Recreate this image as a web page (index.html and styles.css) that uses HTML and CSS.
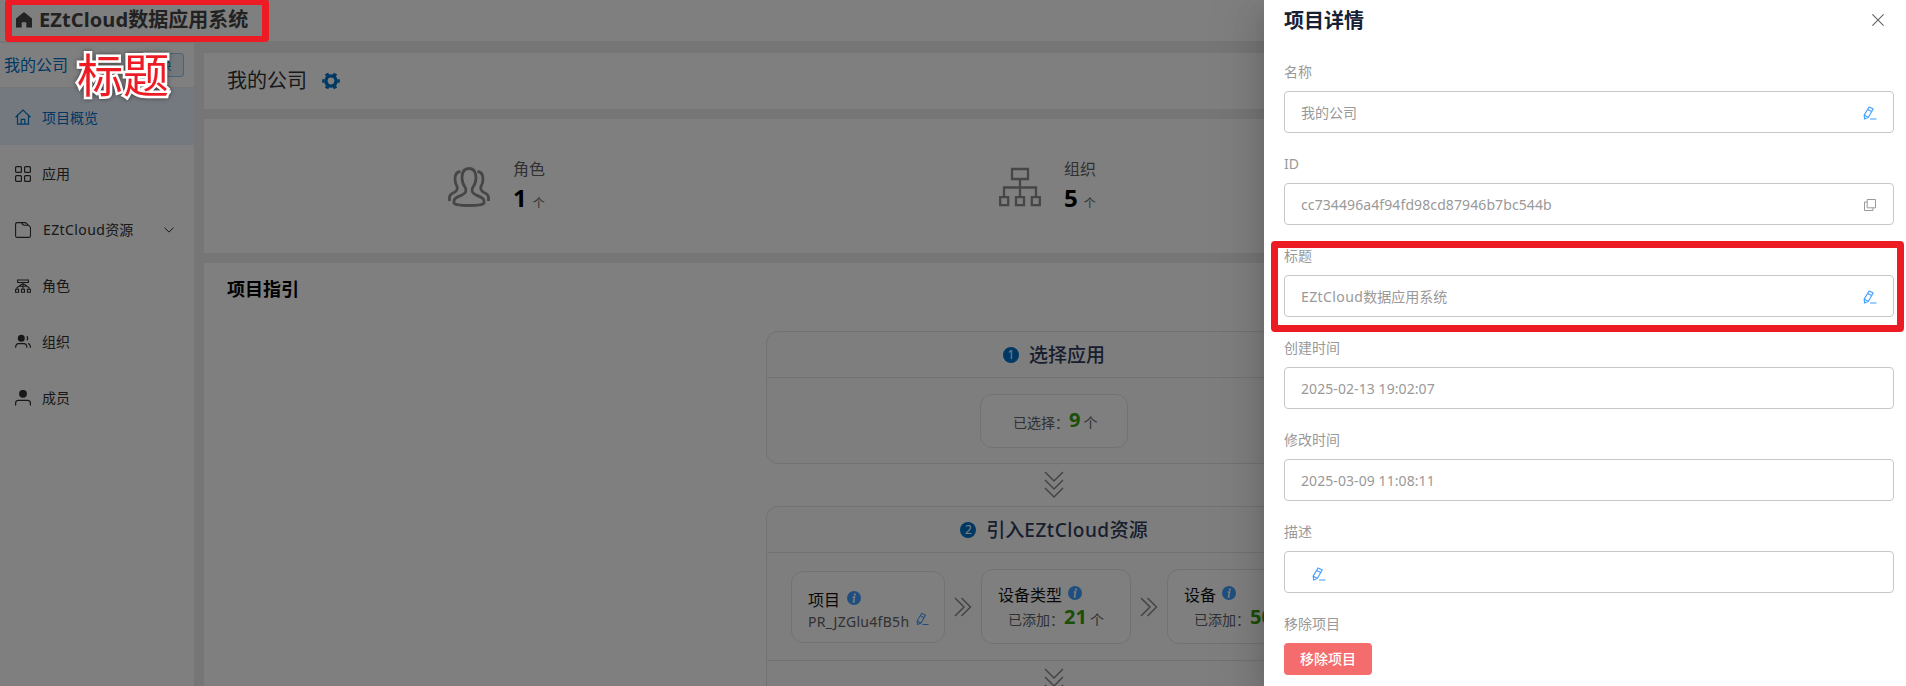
FILE: index.html
```html
<!DOCTYPE html>
<html lang="zh-CN">
<head>
<meta charset="utf-8">
<title>EZtCloud数据应用系统</title>
<link rel="stylesheet" href="styles.css">
</head>
<body>
<svg class="sprite" aria-hidden="true">
  <symbol id="edit" viewBox="0 0 14 14"><path d="M6.100 .9 10.200 3 5.400 11.300 1.700 13 1.100 9.200z M4.700 3.400 8.700 5.600 M1.300 9.200 5.200 11.300 M7 13h6.500" fill="none" stroke="currentColor" stroke-width="1.1"/></symbol>
  <symbol id="info" viewBox="0 0 14 14"><circle cx="7" cy="7" r="7" fill="currentColor"/><circle cx="7.9" cy="3.6" r="1.1" fill="#fff"/><path d="M5.700 6.100h1.800L6.500 10.600c0 .5.6.4 1.200 0" fill="none" stroke="#fff" stroke-width="1.5"/></symbol>
  <symbol id="down" viewBox="0 0 20 28"><path d="M1 1l9 9 9-9M1 9l9 9 9-9M1 17l9 9 9-9" fill="none" stroke="currentColor" stroke-width="1.5"/></symbol>
  <symbol id="next" viewBox="0 0 18 20"><path d="M1 1l9 9-9 9M7.500 1l9 9-9 9" fill="none" stroke="currentColor" stroke-width="1.5"/></symbol>
</svg>
<div class="app">
  <header class="topbar">
    <svg class="home" viewBox="0 0 16 16"><path d="M8 0 0 6.600V15.500h5.700V10.200h4.600v5.300H16V6.600z" fill="currentColor"/></svg>
    <h1><span class="lat">EZtCloud</span>数据应用系统</h1>
  </header>
  <div class="body">
    <aside class="side">
      <div class="company"><span>我的公司</span><button class="switch">切换</button></div>
      <nav>
        <a class="item active"><svg viewBox="0 0 16 16"><path d="M.5 8.200 8 1l7.500 7.200M2.500 6.700v8.500h11V6.700M6.200 15v-4.700h3.600V15" fill="none" stroke="currentColor" stroke-width="1.2"/></svg><span>项目概览</span></a>
        <a class="item"><svg viewBox="0 0 16 16"><g fill="none" stroke="currentColor" stroke-width="1.200"><rect x=".6" y=".6" width="5.800" height="5.800" rx="1"/><rect x="9.600" y=".6" width="5.800" height="5.800" rx="1"/><rect x=".6" y="9.600" width="5.800" height="5.800" rx="1"/><rect x="9.600" y="9.600" width="5.800" height="5.800" rx="1"/></g></svg><span>应用</span></a>
        <a class="item"><svg viewBox="0 0 16 16"><path d="M2 .6h8.500l5 4.600v8.700a1.500 1.500 0 0 1-1.500 1.500H2A1.500 1.500 0 0 1 .6 14V2A1.500 1.500 0 0 1 2 .6zM6.800.6c0 1.800.7 2.400 2.400 2.700h3.500" fill="none" stroke="currentColor" stroke-width="1.100"/></svg><span class="wide"><span class="lat">EZtCloud</span>资源</span><svg class="arrow" viewBox="0 0 10 6"><path d="M.5.7 5 5.100 9.500.7" fill="none" stroke="currentColor"/></svg></a>
        <a class="item"><svg viewBox="0 0 16 16"><path d="M2.600 2h10.800v2.500H2.600zM8 4.500v6.600M2 11V9.500l2-1.200h8l2 1.200V11M4 8.300l2.500-2h3l2.500 2M.6 11.300h3v2.900h-3zM6.500 11.300h3v2.900h-3zM12.400 11.300h3v2.900h-3z" fill="none" stroke="currentColor" stroke-width="1.100"/></svg><span>角色</span></a>
        <a class="item"><svg viewBox="0 0 16 16"><circle cx="6.300" cy="4.300" r="3.500" fill="currentColor"/><path d="M.6 13.800c0-3 1-4.200 3-4.200h5.300c2 0 3 1.200 3 4.200M11.700 2.200c1.300 1 1.300 3 0 4M13 9.300c1.700.5 2.400 1.800 2.400 4.500" fill="none" stroke="currentColor" stroke-width="1.200"/></svg><span>组织</span></a>
        <a class="item"><svg viewBox="0 0 16 16"><circle cx="8" cy="3.800" r="3.900" fill="currentColor"/><path d="M.6 15.500v-2.300c0-1.900 1-2.900 2.700-2.900h9.400c1.700 0 2.700 1 2.700 2.900v2.300" fill="none" stroke="currentColor" stroke-width="1.200"/></svg><span>成员</span></a>
      </nav>
    </aside>
    <main class="main">
      <section class="card head"><span>我的公司</span>
        <svg class="gear" viewBox="0 0 18 18"><path d="M9 3.900a5.100 5.100 0 1 0 0 10.200A5.100 5.100 0 1 0 9 3.900z" fill="none" stroke="currentColor" stroke-width="3.400"/><path d="M5.600 3.700 4.600 1.500M12.400 3.700 13.400 1.500M5.600 14.300 4.600 16.500M12.400 14.300 13.400 16.500M2.500 9H.2M15.500 9h2.300" fill="none" stroke="currentColor" stroke-width="3.600"/></svg>
      </section>
      <section class="card stats">
        <div class="stat">
          <svg viewBox="0 0 42 40"><path d="M21 1.500c-5 0-7 4-7 9 0 4 1 7 3 9.500 2 4 1 6-3 8-5 2-8 3-8 6v2c0 1.500 6 2.500 15 2.500s15-1 15-2.500v-2c0-3-3-4-8-6-4-2-5-4-3-8 2-2.500 3-5.500 3-9.500 0-5-2-9-7-9zM12.500 4.500C8 5 7 8.500 7 12c0 3 .5 5 2 7.500 1 3 0 4.500-3 6-3 1.200-4.500 2.500-4.500 5V34M29.500 4.500C34 5 35 8.500 35 12c0 3-.5 5-2 7.500-1 3 0 4.500 3 6 3 1.200 4.500 2.500 4.500 5V34" fill="none" stroke="currentColor" stroke-width="2.800"/></svg>
          <div><p>角色</p><strong>1</strong><small>个</small></div>
        </div>
        <div class="stat">
          <svg viewBox="0 0 42 40"><path d="M13 2h16v10H13zM21 12v18M5 30v-9.500h32V30M1.200 30.200h8v8h-8zM17 30.200h8v8h-8zM32.800 30.200h8v8h-8z" fill="none" stroke="currentColor" stroke-width="2.300"/></svg>
          <div><p>组织</p><strong>5</strong><small>个</small></div>
        </div>
      </section>
      <section class="card guide">
        <h2>项目指引</h2>
        <div class="flow">
          <div class="step">
            <h3><i>1</i><span>选择应用</span></h3>
            <div class="steps one"><div class="box pick">已选择：<b>9</b><span>个</span></div></div>
          </div>
          <svg class="down"><use href="#down"/></svg>
          <div class="step tall">
            <h3><i>2</i><span>引入<span class="lat">EZtCloud</span>资源</span></h3>
            <div class="steps">
              <div class="box proj"><p>项目<svg class="info"><use href="#info"/></svg></p><div class="code"><span>PR_JZGlu4fB5h</span><svg class="edit"><use href="#edit"/></svg></div></div>
              <svg class="next"><use href="#next"/></svg>
              <div class="box kind"><p>设备类型<svg class="info"><use href="#info"/></svg></p><div class="count">已添加：<b>21</b><span>个</span></div></div>
              <svg class="next"><use href="#next"/></svg>
              <div class="box kind"><p>设备<svg class="info"><use href="#info"/></svg></p><div class="count">已添加：<b>50</b><span>个</span></div></div>
            </div>
            <div class="more"><svg class="down"><use href="#down"/></svg></div>
          </div>
        </div>
      </section>
    </main>
  </div>
</div>
<div class="overlay"></div>
<aside class="drawer">
  <header><h2>项目详情</h2><svg viewBox="0 0 12 12"><path d="M.4.4l11.200 11.200M11.600.4.4 11.600" stroke="currentColor" stroke-width="1.100"/></svg></header>
  <div class="field"><label>名称</label><div class="input"><span>我的公司</span><svg class="edit"><use href="#edit"/></svg></div></div>
  <div class="field"><label>ID</label><div class="input"><span class="id">cc734496a4f94fd98cd87946b7bc544b</span><svg class="copy" viewBox="0 0 12 12"><path d="M3.200.5h8.300v8.300H3.200zM3 3H.5v8.500H9V9" fill="none" stroke="currentColor"/></svg></div></div>
  <div class="field"><label>标题</label><div class="input"><span><span class="lat">EZtCloud</span>数据应用系统</span><svg class="edit"><use href="#edit"/></svg></div></div>
  <div class="field"><label>创建时间</label><div class="input"><span class="date">2025-02-13 19:02:07</span></div></div>
  <div class="field"><label>修改时间</label><div class="input"><span class="date">2025-03-09 11:08:11</span></div></div>
  <div class="field"><label>描述</label><div class="input desc"><svg class="edit"><use href="#edit"/></svg></div></div>
  <div class="field"><label>移除项目</label><button class="remove">移除项目</button></div>
</aside>
<div class="mark mark-title"></div>
<div class="mark mark-field"></div>
<div class="note">标题</div>
</body>
</html>
```
FILE: styles.css
```css
* { box-sizing: border-box; }
body, h1, h2, h3, p { margin: 0; }
body {
  width: 1906px; height: 686px; overflow: hidden; position: relative;
  font: 14px/20px "Noto Sans", "Noto Sans CJK SC", sans-serif;
  color: #303133; background: #ececec;
}
svg { display: block; flex: none; }
.sprite { position: absolute; width: 0; height: 0; }
button { font-family: inherit; }

.app { height: 686px; display: flex; flex-direction: column; overflow: hidden; }
.topbar { height: 41px; flex: none; background: #fff; display: flex; align-items: center; padding: 0 0 1px 16px; gap: 7px; color: #444; }
.topbar h1 { font-size: 20px; line-height: 28px; font-weight: 700; white-space: nowrap; }
.topbar .lat { letter-spacing: .1px; }
.home { width: 16px; height: 16px; }
.body { display: flex; flex: 1; min-height: 0; padding-top: 2px; }

.side { width: 194px; background: #fff; flex: none; }
.company { height: 45px; display: flex; align-items: center; justify-content: space-between; padding: 0 10px 0 4px; border-bottom: 1px solid #ececec; font-size: 16px; color: #0070c9; }
.switch { width: 49px; height: 24px; padding: 0; font-size: 12px; color: #0070c9; background: #e6f1fa; border: 1px solid #99c6e9; border-radius: 3px; }
.item { height: 56px; display: flex; align-items: center; gap: 11px; padding: 1px 0 0 15px; color: #303133; }
.item svg { width: 16px; height: 16px; }
.item span { padding-top: 1px; }
.item.active { background: #e9f3ff; height: 57px; color: #0070c9; }
.item .wide { margin-left: 1px; }
.item .lat { letter-spacing: .4px; }
.item .arrow { width: 10px; height: 6px; margin: 0 20px 0 auto; }

.main { flex: 1; padding: 10px 0 0 10px; display: flex; flex-direction: column; gap: 10px; min-width: 0; }
.card { background: #fff; flex: none; }
.head { height: 56px; display: flex; align-items: center; padding-left: 23px; gap: 15px; font-size: 20px; }
.gear { width: 18px; height: 18px; color: #0070c9; }
.stats { height: 134px; display: flex; padding-left: 244px; }
.stat { width: 551px; display: flex; gap: 23px; padding-top: 38px; flex: none; }
.stat > svg { width: 42px; height: 40px; margin-top: 10px; color: #8c8c8c; }
.stat p { font-size: 16px; line-height: 25px; color: #606266; }
.stat strong { font-size: 24px; line-height: 32px; color: #000; display: inline-block; }
.stat small { font-size: 12px; color: #606266; margin-left: 6px; position: relative; top: 1px; }
.guide { flex: 1; padding: 12px 0 0 23px; }
.guide h2 { font-size: 18px; line-height: 28px; color: #000; }
.flow { width: 576px; margin: 28px 0 0 539px; display: flex; flex-direction: column; align-items: center; }
.step { width: 576px; height: 133px; border: 1px solid #e4e4e4; border-radius: 12px; background: #fcfdfd; }
.step h3 { height: 46px; border-bottom: 1px solid #e4e4e4; display: flex; align-items: center; justify-content: center; gap: 10px; font-size: 19px; font-weight: 500; color: #303d5c; }
.step h3 .lat { letter-spacing: .5px; font-weight: 500; }
.step i { width: 16px; height: 16px; border-radius: 8px; background: #0070c9; color: #fff; font: 12px/16px "Noto Sans", sans-serif; text-align: center; }
.steps { display: flex; align-items: center; padding: 16px 0 16px 24px; }
.steps.one { justify-content: center; padding-left: 0; }
.box { border: 1px solid #e4e4e4; border-radius: 12px; background: #fff; color: #606266; flex: none; white-space: nowrap; }
.box b { font-size: 20px; color: #389e0d; margin-right: 3px; position: relative; top: -1px; }
.pick { width: 148px; height: 54px; padding: 12px 0 0 32px; line-height: 28px; }
.down { width: 20px; height: 28px; color: #888; margin: 7px 0; }
.tall { height: 240px; border-bottom: 0; border-radius: 12px 12px 0 0; }
.tall .steps { height: 108px; border-bottom: 1px solid #e4e4e4; }
.box p { display: flex; gap: 7px; font-size: 16px; line-height: 24px; color: #111; }
.info { width: 14px; height: 14px; margin-top: 3px; color: #409eff; }
.proj { width: 154px; height: 72px; padding: 16px 0 0 16px; }
.code { display: flex; gap: 7px; letter-spacing: .3px; line-height: 19px; }
.code .edit { width: 13px; height: 14px; color: #409eff; }
.kind { width: 150px; height: 75px; padding: 13px 0 0 16px; }
.kind p { gap: 6px; }
.kind .count { padding-left: 10px; line-height: 22px; }
.next { width: 18px; height: 20px; margin: 0 9px; color: #888; }
.more { display: flex; justify-content: center; }

.overlay { position: absolute; inset: 0; background: rgba(0, 0, 0, .5); }
.drawer {
  position: absolute; top: 0; right: 0; width: 642px; height: 686px; padding: 0 12px 0 20px; background: #fff;
  box-shadow: 0 16px 48px 16px rgba(0,0,0,.08), 0 12px 32px rgba(0,0,0,.12), 0 8px 16px -8px rgba(0,0,0,.16);
  color: #999;
}
.drawer header { height: 61px; display: flex; justify-content: space-between; padding: 5px 10px 0 0; color: #606266; }
.drawer h2 { font-size: 20px; line-height: 31px; color: #172033; }
.drawer header svg { width: 12px; height: 12px; margin-top: 9px; }
.field { height: 92px; }
.field label { display: block; height: 30px; line-height: 22px; }
.input { height: 42px; border: 1px solid #c8c8c8; border-radius: 4px; display: flex; align-items: center; justify-content: space-between; padding: 1px 16px 0; }
.input .edit { width: 14px; height: 14px; color: #409eff; }
.input .copy { width: 12px; height: 12px; margin-right: 1px; }
.input .id { letter-spacing: .1px; }
.input .lat { letter-spacing: .4px; }
.input .date { letter-spacing: .08px; }
.input.desc { padding: 4px 0 0 27px; }
.remove { display: block; margin-top: 0; width: 88px; height: 32px; border: 0; border-radius: 4px; padding: 0 0 2px; background: #f56c6c; color: #fff; font-size: 14px; font-weight: 500; }

.mark { position: absolute; border: 7px solid #ed1c24; border-radius: 4px; }
.mark-title { left: 5px; top: -1px; width: 264px; height: 43px; border-width: 6px 7px; }
.mark-field { left: 1271px; top: 241px; width: 633px; height: 91px; }
.note { position: absolute; left: 77px; top: 44px; font-size: 46px; line-height: 60px; font-weight: 400; color: #ed1c24; -webkit-text-stroke: 5px #fff; paint-order: stroke fill; filter: drop-shadow(0 0 2px rgba(0,0,0,.5)); white-space: nowrap; }
```
